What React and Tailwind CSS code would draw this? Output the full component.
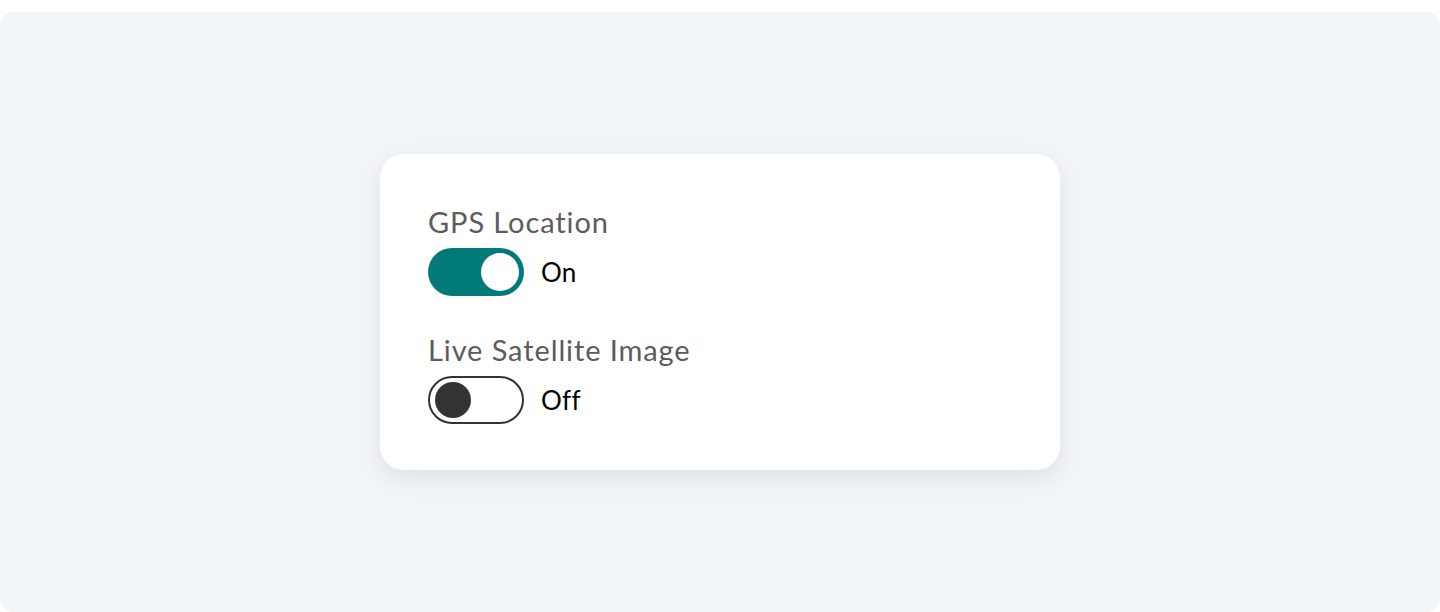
import React from "react";

function Toggle({ on }) {
  if (on) {
    return (
      <div className="relative w-[96px] h-[48px] rounded-full bg-[#037a7a] flex items-center justify-end pr-[5px]">
        <div className="w-[38px] h-[38px] rounded-full bg-white" />
      </div>
    );
  }
  return (
    <div className="relative w-[96px] h-[48px] rounded-full bg-white border-2 border-[#333333] flex items-center pl-[5px]">
      <div className="w-[36px] h-[36px] rounded-full bg-[#333333]" />
    </div>
  );
}

function Row({ label, on }) {
  return (
    <div className="flex flex-col">
      <div className="text-[29px] leading-[36px] tracking-[0.9px] text-[#5c5c5c]">{label}</div>
      <div className="flex items-center gap-[17px] mt-[8px]">
        <Toggle on={on} />
        <span className="text-[26px] leading-[32px] tracking-[0.3px] text-black">{on ? "On" : "Off"}</span>
      </div>
    </div>
  );
}

export default function App() {
  return (
    <div className="w-[1440px] h-[612px] bg-white pt-[12px]" style={{ fontFamily: "Lato, 'Open Sans', sans-serif" }}>
      <div className="w-full h-[600px] rounded-[14px] bg-[#f2f5f8] flex items-center justify-center">
        <div className="w-[680px] h-[316px] rounded-[24px] bg-white shadow-[0_8px_24px_rgba(0,0,0,0.08)] pl-[48px] pt-[50px] flex flex-col gap-[36px]">
          <Row label="GPS Location" on />
          <Row label="Live Satellite Image" on={false} />
        </div>
      </div>
    </div>
  );
}
